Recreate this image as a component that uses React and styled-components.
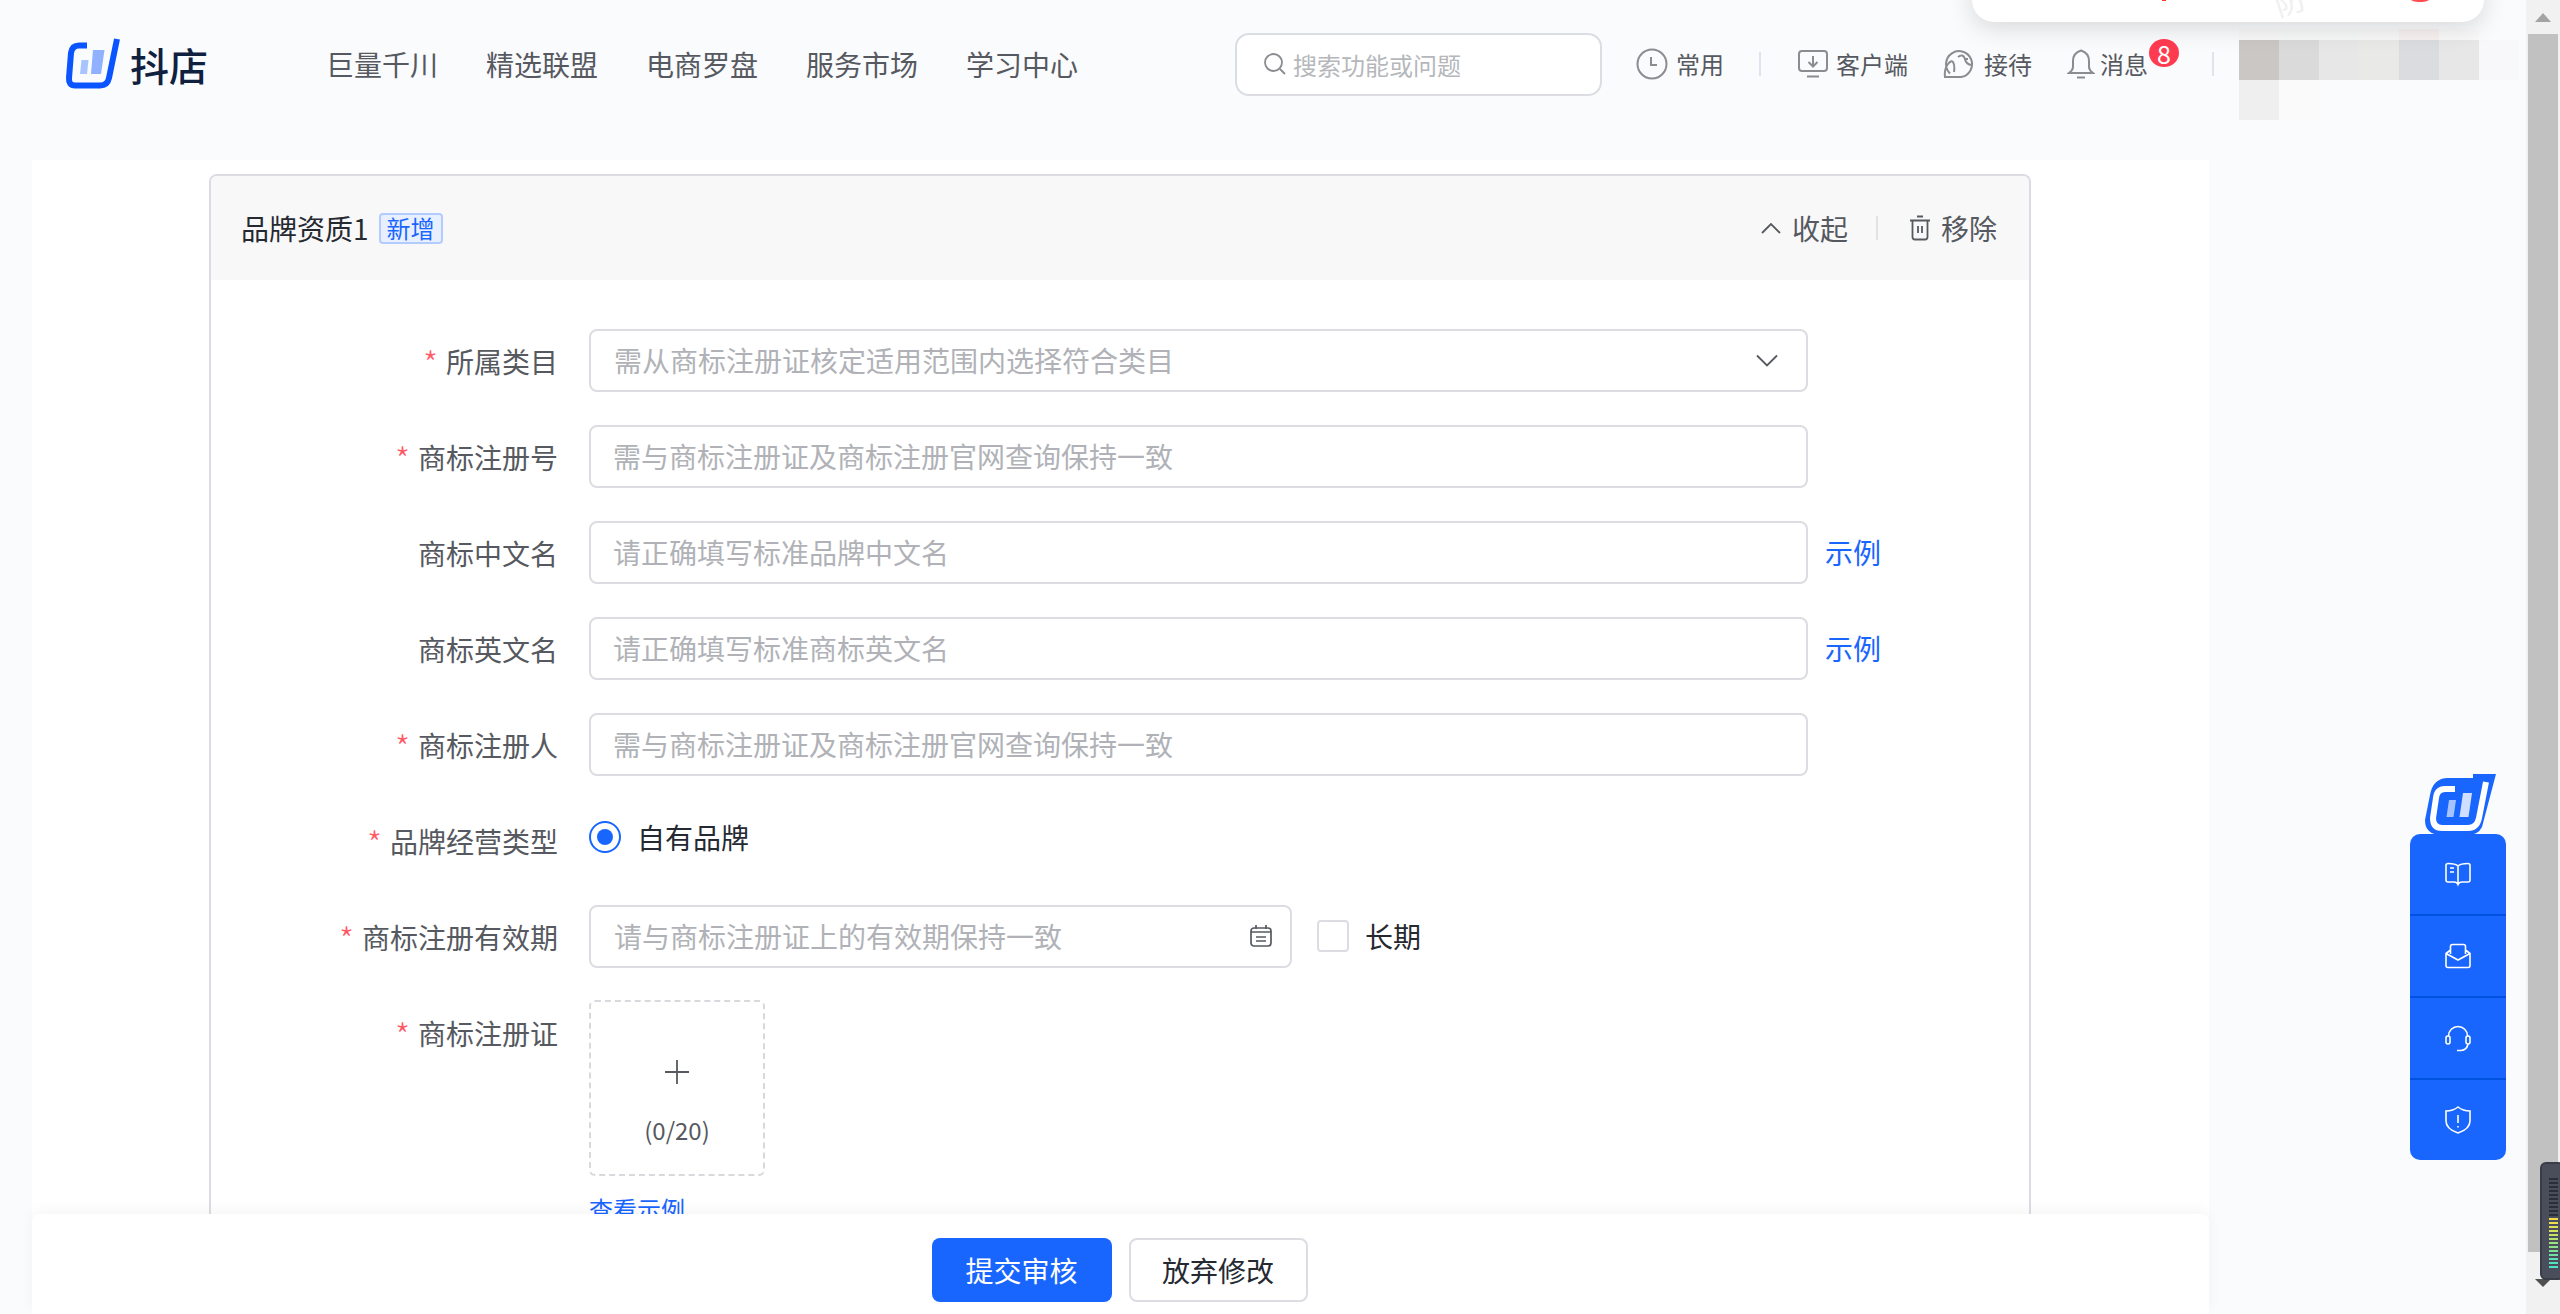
import React from 'react';
import styled, { createGlobalStyle } from 'styled-components';

const FONT = '"Noto Sans CJK SC", "Noto Sans", sans-serif';
const BLUE = '#1966ff';
const LINE = '#dcdde3';

const navItems = ['巨量千川', '精选联盟', '电商罗盘', '服务市场', '学习中心'];

const mosaicRows = [
	['#f8f8f8', '#f7f8f8', '#f7f8f8', '#f7f8f7', '#f7f1f1', '#f8f9f8', '#fafbfc'],
	['#cbc7c4', '#dadada', '#e6e7e6', '#e9e9e8', '#dbdcdf', '#e6e7e6', '#f8f8fa'],
	['#f0efef', '#fafafb', '#fafbfd', '#fafbfd', '#fafbfd', '#fafbfd', '#fafbfd']
];

const ledColors = [
	...Array(10).fill('#2b2e38'),
	'#f0dc4e',
	'#ecdf52',
	'#e0e058',
	'#d4e05c',
	'#c4e164',
	'#b4e270',
	'#a0e27c',
	'#8ce288',
	'#7ce294',
	'#6ce2a4',
	'#5ce2b4',
	'#54e2bc',
	'#50e2c4'
];

const LogoMark = () => (
	<LogoSvg viewBox="14 10 60 60">
		<path d="M36 20.500H28Q21 20.500 20 28L18 53Q17.500 60.500 24 60.500H49Q56.500 60.500 58 53L66 14" fill="none" stroke="#0a55ff" strokeWidth="6" />
		<path d="M30.500 35h7l-1.500 14h-7z" fill="#a8c4ff" />
		<path d="M42 25h11.500l-3.500 24h-10z" fill="#8fb1ff" />
	</LogoSvg>
);

const ClockIcon = () => (
	<svg width="32" height="32" viewBox="0 0 32 32" fill="none" stroke="#8a8c90" strokeWidth="2">
		<circle cx="16" cy="16" r="14.500" />
		<path d="M15 9v8h6" strokeWidth="2" />
	</svg>
);

const MonitorIcon = () => (
	<svg width="30" height="28" viewBox="0 0 30 28" fill="none" stroke="#8a8c90" strokeWidth="2">
		<rect x="1" y="1" width="28" height="20" rx="3" />
		<path d="M15 6v10M10.500 12l4.500 4.500 4.500-4.500M9 26.500h12" />
	</svg>
);

const BirdIcon = () => (
	<svg width="32" height="28" viewBox="0 0 32 28" fill="none" stroke="#8a8c90" strokeWidth="2">
		<path d="M7 23.500A13 13 0 1 1 18 27Q7 27 2 27Q1 19 5 14Q8 10 10 12Q12 15 11 22" />
		<path d="M15 7Q20 3 22 9Q23 14 28 15M21 9h4" />
	</svg>
);

const BellIcon = () => (
	<svg width="28" height="30" viewBox="0 0 28 30" fill="none" stroke="#8a8c90" strokeWidth="2">
		<path d="M14 1.500Q6 4 6 12V18Q6 21 2 24H26Q22 21 22 18V12Q22 4 14 1.500ZM10 28.500h8" />
	</svg>
);

const BookIcon = () => (
	<svg width="26" height="26" viewBox="0 0 26 26" fill="none" stroke="#fff" strokeWidth="1.600">
		<path d="M13 5C11 3 9 2.500 3 2.500Q1 2.500 1 4.500V19Q1 21 3 21H9Q12 21 13 23.500Q14 21 17 21H23Q25 21 25 19V4.500Q25 2.500 23 2.500C17 2.500 15 3 13 5ZM13 5V23M5 7h4M5 11h4" />
	</svg>
);

const MailIcon = () => (
	<svg width="26" height="26" viewBox="0 0 26 26" fill="none" stroke="#fff" strokeWidth="1.600">
		<path d="M5.500 11V3.500Q5.500 1.500 7.500 1.500H18.500Q20.500 1.500 20.500 3.500V11M5.500 7L1 10.500V22.500Q1 24.500 3 24.500H23Q25 24.500 25 22.500V10.500L20.500 7M1 10.500L13 17L25 10.500" />
	</svg>
);

const HeadsetIcon = () => (
	<svg width="26" height="28" viewBox="0 0 26 28" fill="none" stroke="#fff" strokeWidth="1.600">
		<path d="M3.500 12A9.500 9.500 0 0 1 22.500 12M23 20Q22 26 16 26.500H12" />
		<rect x="1" y="12" width="4" height="8" rx="2" />
		<rect x="21" y="12" width="4" height="8" rx="2" />
	</svg>
);

const ShieldIcon = () => (
	<svg width="26" height="28" viewBox="0 0 26 28" fill="none" stroke="#fff" strokeWidth="1.600">
		<path d="M13 1Q18 5 25 5V15Q25 23 13 27Q1 23 1 15V5Q8 5 13 1ZM13 9V17M13 20V21.500" />
	</svg>
);

const Field = ({ label, required, placeholder, example }) => (
	<Row>
		<Label $required={required}>{label}</Label>
		<Input>
			<Placeholder>{placeholder}</Placeholder>
		</Input>
		{example && <ExampleLink>示例</ExampleLink>}
	</Row>
);

const App = () => {
	return (
		<Page>
			<GlobalStyle />
			<Main>
				<Header>
					<Brand>
						<LogoMark />
						<BrandName>抖店</BrandName>
					</Brand>
					<Nav>
						{navItems.map((item) => (
							<NavItem key={item}>{item}</NavItem>
						))}
					</Nav>
					<Search>
						<svg width="24" height="24" viewBox="0 0 24 24" fill="none" stroke="#8a8c90" strokeWidth="1.800">
							<circle cx="10.500" cy="10.500" r="8.500" />
							<path d="M17 17l5 5" />
						</svg>
						<SearchText>搜索功能或问题</SearchText>
					</Search>
					<Tools>
						<Tool>
							<ClockIcon />
							<span>常用</span>
						</Tool>
						<ToolDivider />
						<ClientTool>
							<MonitorIcon />
							<span>客户端</span>
						</ClientTool>
						<Tool>
							<BirdIcon />
							<ToolText>接待</ToolText>
						</Tool>
						<MessageTool>
							<BellIcon />
							<span>消息</span>
							<Badge>8</Badge>
						</MessageTool>
						<ToolDivider />
					</Tools>
					<Mosaic>
						{mosaicRows.flat().map((color, i) => (
							<MosaicCell key={i} $color={color} />
						))}
					</Mosaic>
				</Header>
				<Panel>
					<Card>
						<CardHeader>
							<CardTitle>品牌资质1</CardTitle>
							<Tag>新增</Tag>
							<CardActions>
								<CardAction>
									<svg width="20" height="12" viewBox="0 0 20 12" fill="none" stroke="#565960" strokeWidth="1.800">
										<path d="M1 11L10 2l9 9" />
									</svg>
									<span>收起</span>
								</CardAction>
								<ActionDivider />
								<CardAction>
									<svg width="20" height="26" viewBox="0 0 20 26" fill="none" stroke="#565960" strokeWidth="1.800">
										<path d="M0 5.500h20M2.500 5.500V22Q2.500 24.500 5 24.500H15Q17.500 24.500 17.500 22V5.500M7 1.500h6M8 11v7M12 11v7" />
									</svg>
									<span>移除</span>
								</CardAction>
							</CardActions>
						</CardHeader>
						<Form>
							<Row>
								<Label $required>所属类目</Label>
								<SelectInput>
									<SelectText>需从商标注册证核定适用范围内选择符合类目</SelectText>
									<svg width="22" height="13" viewBox="0 0 22 13" fill="none" stroke="#565960" strokeWidth="1.800">
										<path d="M1 1.500l10 10 10-10" />
									</svg>
								</SelectInput>
							</Row>
							<Field label="商标注册号" required placeholder="需与商标注册证及商标注册官网查询保持一致" />
							<Field label="商标中文名" placeholder="请正确填写标准品牌中文名" example />
							<Field label="商标英文名" placeholder="请正确填写标准商标英文名" example />
							<Field label="商标注册人" required placeholder="需与商标注册证及商标注册官网查询保持一致" />
							<Row>
								<Label $required>品牌经营类型</Label>
								<RadioWrap>
									<Radio />
									<span>自有品牌</span>
								</RadioWrap>
							</Row>
							<Row>
								<Label $required>商标注册有效期</Label>
								<DateInput>
									<SelectText>请与商标注册证上的有效期保持一致</SelectText>
									<svg width="22" height="22" viewBox="0 0 22 22" fill="none" stroke="#565960" strokeWidth="1.700">
										<rect x="1" y="3" width="20" height="18" rx="3" />
										<path d="M6 0v4M16 0v4M1 7h20M6 12h10M6 16h10" />
									</svg>
								</DateInput>
								<CheckWrap>
									<Checkbox />
									<span>长期</span>
								</CheckWrap>
							</Row>
							<UploadRow>
								<Label $required>商标注册证</Label>
								<UploadColumn>
									<UploadBox>
										<svg width="24" height="24" viewBox="0 0 24 24" fill="none" stroke="#565960" strokeWidth="1.800">
											<path d="M12 0v24M0 12h24" />
										</svg>
										<UploadCount>(0/20)</UploadCount>
									</UploadBox>
									<SampleLink>查看示例</SampleLink>
								</UploadColumn>
							</UploadRow>
						</Form>
					</Card>
				</Panel>
			</Main>
			<Scrollbar>
				<ArrowCell>
					<ArrowUp />
				</ArrowCell>
				<Thumb />
				<ArrowCell>
					<ArrowDown />
				</ArrowCell>
			</Scrollbar>

			<Popup>
				<PopupDot />
				<PopupMark>防</PopupMark>
				<PopupBadge />
			</Popup>

			<Widget>
				<WidgetLogo viewBox="0 0 120 80">
					<path d="M73 9H96L82 62Q78 70 68 70H42Q25 70 25 55L30 30Q33 13 48 13H73Z" fill={BLUE} />
					<path d="M55 24H45Q37 24 36 33L33 53Q33 63 42 63H68Q77 63 79 53L86 17" fill="none" stroke="#fff" strokeWidth="6" />
					<path d="M49 35h7l-2.500 17h-7z" fill="#a6c2ff" />
					<path d="M63 28h9l-3.500 24h-9z" fill="#d0dfff" />
				</WidgetLogo>
				<WidgetItem>
					<BookIcon />
				</WidgetItem>
				<WidgetItem>
					<MailIcon />
				</WidgetItem>
				<WidgetItem>
					<HeadsetIcon />
				</WidgetItem>
				<WidgetItem>
					<ShieldIcon />
				</WidgetItem>
			</Widget>

			<Meter>
				{ledColors.map((color, i) => (
					<Led key={i} $color={color} />
				))}
			</Meter>

			<BottomBar>
				<PrimaryButton>提交审核</PrimaryButton>
				<GhostButton>放弃修改</GhostButton>
			</BottomBar>
		</Page>
	);
};

const GlobalStyle = createGlobalStyle`
	html,
	body {
		margin: 0;
		padding: 0;
		background: #fafbfd;
		overflow: hidden;
	}
	* {
		box-sizing: border-box;
	}
`;

const Page = styled.div`
	position: relative;
	display: flex;
	width: 2560px;
	height: 1314px;
	overflow: hidden;
	font-family: ${FONT};
	font-size: 28px;
	color: #252931;
	background: #fafbfd;
`;

const Main = styled.div`
	width: 2526px;
	height: 1314px;
	flex: none;
	overflow: hidden;
`;

const Header = styled.header`
	display: flex;
	align-items: center;
	height: 160px;
	padding: 0 0 32px 65px;
`;

const Brand = styled.div`
	display: flex;
	align-items: center;
	gap: 5px;
	width: 261px;
	flex: none;
`;

const LogoSvg = styled.svg`
	width: 60px;
	height: 60px;
	margin-top: 2px;
	flex: none;
`;

const BrandName = styled.div`
	font-size: 39px;
	line-height: 50px;
	font-weight: 500;
	color: #10203f;
`;

const Nav = styled.nav`
	display: flex;
	gap: 48px;
	width: 909px;
	flex: none;
`;

const NavItem = styled.div`
	color: #565960;
	font-size: 28px;
	line-height: 40px;
	white-space: nowrap;
`;

const Search = styled.div`
	display: flex;
	align-items: center;
	gap: 6px;
	width: 367px;
	height: 63px;
	flex: none;
	padding-left: 26px;
	background: #fff;
	border: 2px solid ${LINE};
	border-radius: 14px;
`;

const SearchText = styled.span`
	color: #b5b7bb;
	font-size: 24px;
`;

const Tools = styled.div`
	display: flex;
	align-items: center;
	gap: 35px;
	margin-left: 34px;
	flex: none;
`;

const Tool = styled.div`
	display: flex;
	align-items: center;
	gap: 8px;
	color: #565960;
	font-size: 24px;
	line-height: 34px;
	white-space: nowrap;
`;

const ClientTool = styled(Tool)`
	margin-left: 2px;
`;

const ToolText = styled.span`
	margin-left: 1px;
`;

const MessageTool = styled(Tool)`
	position: relative;
	gap: 5px;
	margin-right: 29px;
`;

const Badge = styled.span`
	position: absolute;
	right: -31px;
	top: -8px;
	width: 30px;
	height: 28px;
	border-radius: 50%;
	background: #ff3b50;
	color: #fff;
	font-size: 25px;
	line-height: 28px;
	text-align: center;
`;

const ToolDivider = styled.div`
	width: 2px;
	height: 24px;
	background: #dfe3ee;
`;

const Mosaic = styled.div`
	display: grid;
	grid-template-columns: repeat(7, 40px);
	grid-template-rows: 11px 40px 40px;
	align-self: flex-start;
	margin: 29px 0 0 25px;
	flex: none;
`;

const MosaicCell = styled.div`
	background: ${(p) => p.$color};
`;

const Panel = styled.div`
	width: 2177px;
	height: 1154px;
	margin-left: 32px;
	padding: 14px 0 0 177px;
	background: #fff;
`;

const Card = styled.section`
	width: 1822px;
	height: 1140px;
	border: 2px solid ${LINE};
	border-bottom: none;
	border-radius: 8px 8px 0 0;
	overflow: hidden;
`;

const CardHeader = styled.div`
	display: flex;
	align-items: center;
	height: 104px;
	padding: 0 32px 0 30px;
	background: #f8f8f9;
`;

const CardTitle = styled.div`
	font-size: 28px;
	line-height: 40px;
	color: #252931;
`;

const Tag = styled.span`
	margin-left: 10px;
	padding: 0 6px;
	height: 31px;
	border: 2px solid #b3ccff;
	border-radius: 4px;
	background: #e8f0ff;
	color: ${BLUE};
	font-size: 24px;
	line-height: 26px;
`;

const CardActions = styled.div`
	display: flex;
	align-items: center;
	margin-left: auto;
`;

const CardAction = styled.div`
	display: flex;
	align-items: center;
	gap: 11px;
	color: #565960;
	font-size: 28px;
	line-height: 40px;
`;

const ActionDivider = styled.div`
	width: 2px;
	height: 24px;
	margin: 0 32px 0 28px;
	background: #e2e3e6;
`;

const Form = styled.div`
	padding-top: 48px;
`;

const Row = styled.div`
	display: flex;
	align-items: center;
	height: 64px;
	margin-bottom: 32px;
`;

const UploadRow = styled(Row)`
	align-items: flex-start;
	height: auto;
	margin-bottom: 0;
`;

const Label = styled.label`
	display: block;
	width: 347px;
	margin-right: 31px;
	flex: none;
	color: #565960;
	font-size: 28px;
	line-height: 64px;
	padding-top: 1px;
	height: 64px;
	text-align: right;

	&::before {
		content: ${(p) => (p.$required ? "'*'" : "''")};
		margin-right: 8px;
		color: #ff5a66;
		font-size: 34px;
		font-weight: 300;
		line-height: 1;
		vertical-align: -4px;
	}
`;

const Input = styled.div`
	display: flex;
	align-items: center;
	justify-content: space-between;
	width: 1219px;
	height: 63px;
	padding: 0 14px 0 22px;
	background: #fff;
	border: 2px solid ${LINE};
	border-radius: 8px;
`;

const SelectInput = styled(Input)`
	padding-right: 28px;
`;

const DateInput = styled(Input)`
	width: 703px;
	padding-right: 18px;
`;

const Placeholder = styled.span`
	color: #b0b2b7;
	font-size: 28px;
	line-height: 40px;
`;

const SelectText = styled(Placeholder)`
	margin-left: 1px;
`;

const ExampleLink = styled.a`
	margin-left: 17px;
	color: ${BLUE};
	font-size: 28px;
	line-height: 40px;
`;

const RadioWrap = styled.div`
	display: flex;
	align-items: center;
	gap: 16px;
	margin-top: -6px;
	color: #252931;
	font-size: 28px;
	line-height: 40px;
`;

const Radio = styled.span`
	position: relative;
	width: 32px;
	height: 32px;
	border: 2px solid ${BLUE};
	border-radius: 50%;

	&::after {
		content: '';
		position: absolute;
		inset: 6px;
		border-radius: 50%;
		background: ${BLUE};
	}
`;

const CheckWrap = styled.div`
	display: flex;
	align-items: center;
	gap: 16px;
	margin-left: 25px;
	color: #252931;
	font-size: 28px;
	line-height: 40px;
`;

const Checkbox = styled.span`
	width: 32px;
	height: 32px;
	border: 2px solid ${LINE};
	border-radius: 4px;
	background: #fff;
`;

const UploadColumn = styled.div`
	display: flex;
	flex-direction: column;
	align-items: flex-start;
`;

const UploadBox = styled.div`
	display: flex;
	flex-direction: column;
	align-items: center;
	width: 176px;
	height: 176px;
	padding-top: 58px;
	border: 2px dashed #d8d9dc;
	border-radius: 6px;
`;

const UploadCount = styled.div`
	margin-top: 29px;
	color: #565960;
	font-size: 24px;
	line-height: 34px;
`;

const SampleLink = styled.a`
	margin-top: 16px;
	color: ${BLUE};
	font-size: 24px;
	line-height: 34px;
`;

const Scrollbar = styled.div`
	display: flex;
	flex-direction: column;
	width: 34px;
	flex: none;
	background: #f1f1f1;
`;

const ArrowCell = styled.div`
	display: flex;
	align-items: center;
	justify-content: center;
	height: 34px;
	width: 34px;
`;

const ArrowUp = styled.div`
	width: 0;
	height: 0;
	border-left: 8px solid transparent;
	border-right: 8px solid transparent;
	border-bottom: 9px solid #a3a3a3;
`;

const ArrowDown = styled.div`
	width: 0;
	height: 0;
	margin-top: 28px;
	border-left: 8px solid transparent;
	border-right: 8px solid transparent;
	border-top: 8px solid #505050;
`;

const Thumb = styled.div`
	width: 30px;
	height: 1218px;
	margin-left: 2px;
	background: #c1c1c1;
`;

const Popup = styled.div`
	position: absolute;
	left: 1972px;
	top: -20px;
	width: 512px;
	height: 42px;
	overflow: hidden;
	background: #fff;
	border-radius: 0 0 22px 22px;
	box-shadow: 0 6px 24px rgba(0, 0, 0, 0.14);
`;

const PopupDot = styled.span`
	position: absolute;
	left: 190px;
	top: 18px;
	width: 4px;
	height: 3px;
	background: #ff3b30;
`;

const PopupMark = styled.span`
	position: absolute;
	left: 302px;
	top: 0;
	color: #f0f0f0;
	font-size: 30px;
	line-height: 40px;
	transform: rotate(-18deg);
`;

const PopupBadge = styled.span`
	position: absolute;
	left: 432px;
	top: 0;
	width: 32px;
	height: 22px;
	border-radius: 0 0 14px 14px;
	background: #ff4d4f;
`;

const Widget = styled.div`
	position: absolute;
	left: 2410px;
	top: 834px;
	width: 96px;
	height: 326px;
	background: ${BLUE};
	border-radius: 10px;
`;

const WidgetLogo = styled.svg`
	position: absolute;
	left: -10px;
	top: -69px;
	width: 120px;
	height: 80px;
`;

const WidgetItem = styled.div`
	position: relative;
	display: flex;
	align-items: center;
	justify-content: center;
	height: 82px;
	border-bottom: 2px solid #0052e0;

	&:last-child {
		height: 80px;
		border-bottom: none;
	}
`;

const Meter = styled.div`
	position: absolute;
	left: 2540px;
	top: 1162px;
	display: flex;
	flex-direction: column;
	gap: 2px;
	width: 24px;
	height: 118px;
	padding: 14px 0 0 7px;
	background: #4a4e5a;
	border: 2px solid #3a3d47;
	border-radius: 6px;
`;

const Led = styled.span`
	width: 9px;
	height: 2px;
	background: ${(p) => p.$color};
`;

const BottomBar = styled.div`
	position: absolute;
	left: 32px;
	bottom: 0;
	display: flex;
	justify-content: center;
	gap: 17px;
	width: 2177px;
	height: 100px;
	padding: 24px 2px 0 0;
	background: #fff;
	border-radius: 8px 8px 0 0;
	box-shadow: 0 -4px 14px rgba(0, 0, 0, 0.04);
`;

const PrimaryButton = styled.button`
	width: 180px;
	height: 64px;
	padding: 0;
	background: ${BLUE};
	border: none;
	border-radius: 8px;
	color: #fff;
	font-family: ${FONT};
	font-size: 28px;
`;

const GhostButton = styled(PrimaryButton)`
	width: 179px;
	background: #fff;
	border: 2px solid ${LINE};
	color: #252931;
`;

export default App;
